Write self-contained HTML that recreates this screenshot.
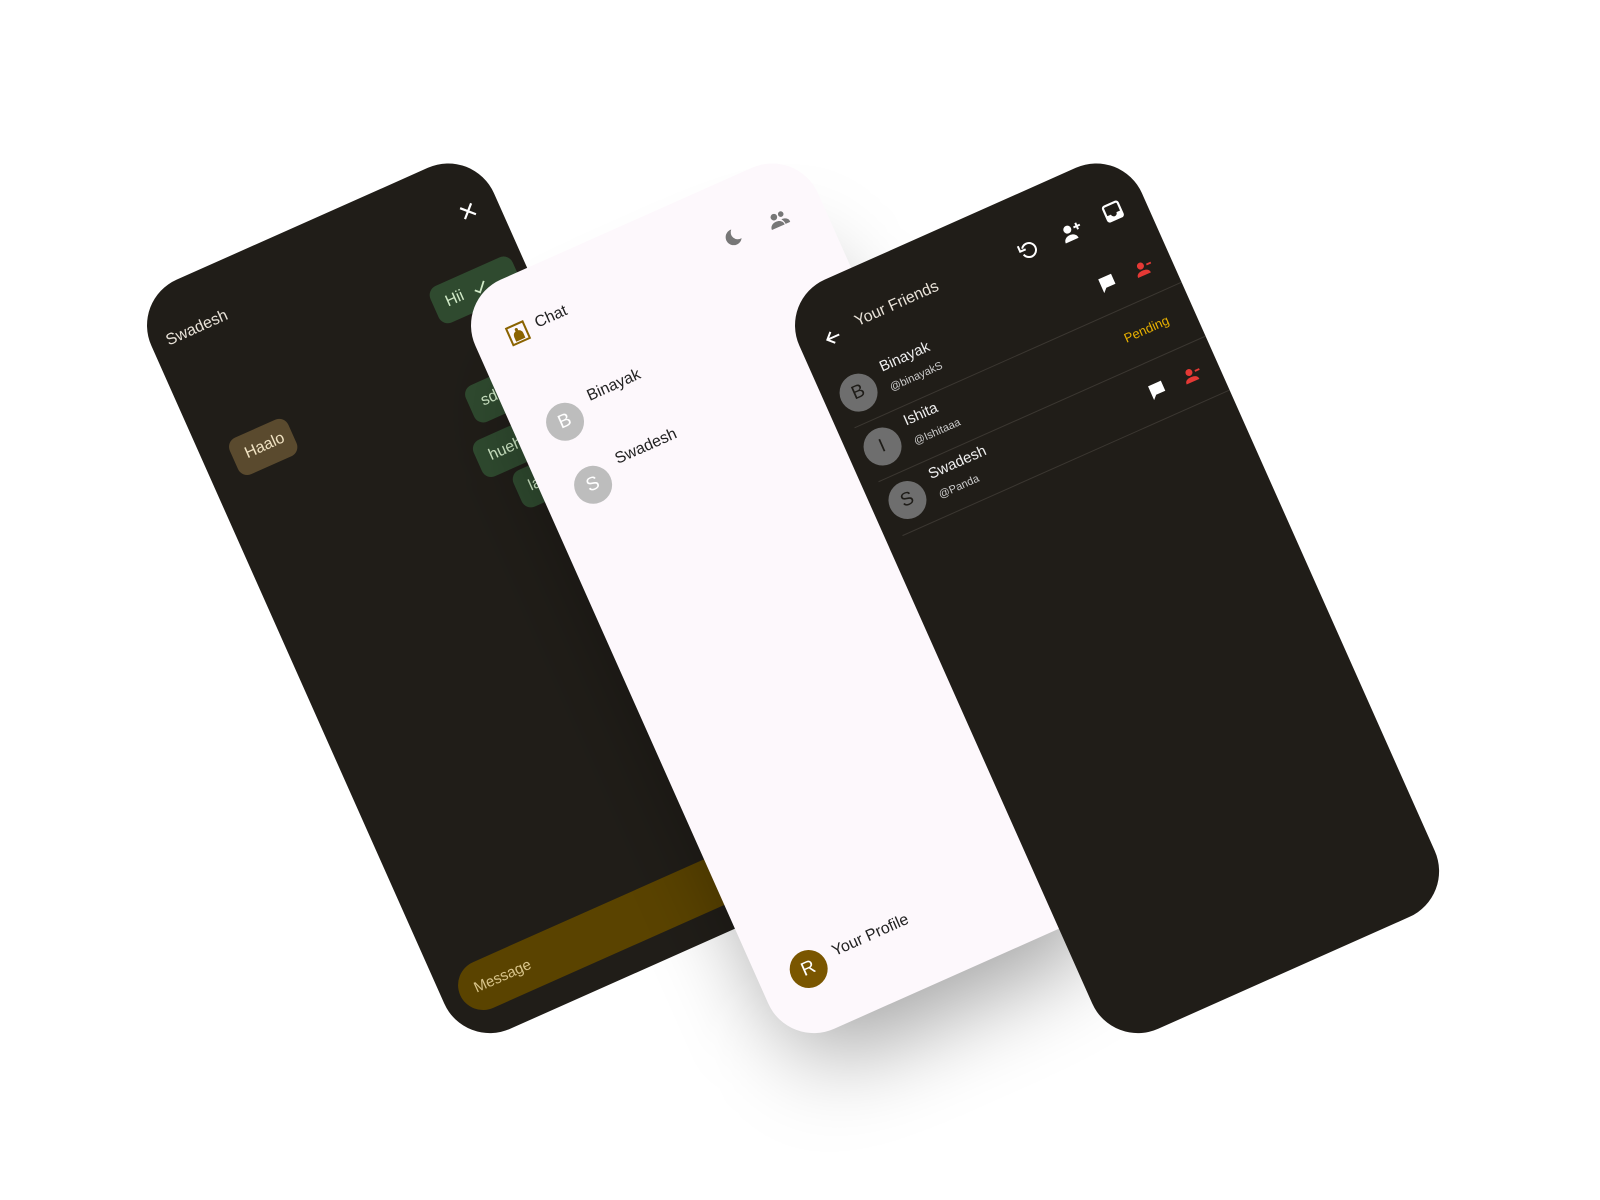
<!DOCTYPE html>
<html><head><meta charset="utf-8"><style>
*{margin:0;padding:0;box-sizing:border-box}
body{width:1600px;height:1200px;background:#fff;position:relative;overflow:hidden;font-family:"Liberation Sans",sans-serif}
.ph{position:absolute;width:375px;height:820px;border-radius:50px;transform-origin:0 0;transform:rotate(-24deg);overflow:hidden}
.dark{background:#201d18}
.light{background:#fdf8fc}
.shadow{position:absolute;width:340px;height:760px;border-radius:60px;transform-origin:0 0;transform:rotate(-24deg);background:rgba(0,0,0,.35);filter:blur(45px)}
.a{position:absolute}
.t{position:absolute;white-space:nowrap;transform:translateY(-50%)}
.c{position:absolute;transform:translate(-50%,-50%)}
.bub{position:absolute;height:40px;border-radius:10px;background:#2f4a2f;color:#cfe8c6;font-size:16px;line-height:40px;padding-left:13px;transform:translateY(-50%)}
.av{position:absolute;width:38px;height:38px;border-radius:50%;transform:translate(-50%,-50%);text-align:center;line-height:38px;font-size:19px}
.div{position:absolute;left:17px;right:0;height:1px;background:#3b3731}
</style></head><body>

<!-- LEFT PHONE -->
<div class="ph dark" style="left:131px;top:300px">
  <div class="t" style="left:16px;top:53px;font-size:16px;color:#e8e2d8">Swadesh</div>
  <svg class="c" style="left:344px;top:56px" width="18" height="18" viewBox="0 0 18 18"><path d="M3 3L15 15M15 3L3 15" stroke="#fff" stroke-width="2.2"/></svg>
  <div class="bub" style="left:274px;width:90px;top:131px">Hii <svg style="vertical-align:middle;margin-left:6px" width="16" height="14" viewBox="0 0 16 14"><path d="M2 7l4 4 8-9" stroke="#cfe8c6" stroke-width="1.8" fill="none"/></svg></div>
  <div class="bub" style="left:266px;width:100px;top:236px">sdfsdf</div>
  <div class="bub" style="left:251px;width:115px;top:289px">huehuehue</div>
  <div class="bub" style="left:275px;width:90px;top:333px">lala</div>
  <div class="bub" style="left:29px;width:64px;top:188px;background:#5a4a2e;color:#f0e2c2">Haalo</div>
  <div class="a" style="left:18px;top:744px;width:340px;height:50px;border-radius:25px;background:#5a4300"></div>
  <div class="t" style="left:34px;top:769px;font-size:15px;color:#d8c48a">Message</div>
</div>

<div class="shadow" style="left:500px;top:380px"></div>

<!-- MIDDLE PHONE -->
<div class="ph light" style="left:455px;top:300px">
  <svg class="c" style="left:44px;top:56px" width="22" height="22" viewBox="0 0 22 22"><rect x="2" y="2" width="18" height="18" fill="none" stroke="#8a6300" stroke-width="2"/><path d="M6 18v-5a5 5 0 0 1 10 0v5z" fill="#8a6300"/><circle cx="11" cy="7" r="1.6" fill="#8a6300"/></svg>
  <div class="t" style="left:64px;top:55px;font-size:16px;color:#222">Chat</div>
  <svg class="c" style="left:279px;top:56px" width="20" height="20" viewBox="0 0 20 20"><path d="M12 2a8 8 0 1 0 6 12A7 7 0 0 1 12 2z" fill="#777"/></svg>
  <svg class="c" style="left:328px;top:58px" width="24" height="18" viewBox="0 0 24 18"><circle cx="9" cy="5" r="3.3" fill="#777"/><circle cx="16.5" cy="5" r="2.8" fill="#777"/><path d="M2 16c0-4 3.5-6 7-6s7 2 7 6z" fill="#777"/><path d="M15 10c3 0 7 1.5 7 5v1h-5c0-2.5-1-4.5-2-6z" fill="#777"/></svg>
  <div class="av" style="left:51px;top:156px;background:#bdbdbd;color:#fff">B</div>
  <div class="t" style="left:82px;top:143px;font-size:16px;color:#222">Binayak</div>
  <div class="av" style="left:51px;top:225px;background:#bdbdbd;color:#fff">S</div>
  <div class="t" style="left:82px;top:212px;font-size:16px;color:#222">Swadesh</div>
  <div class="av" style="left:51px;top:755px;background:#7a5600;color:#fff">R</div>
  <div class="t" style="left:80px;top:750px;font-size:16px;color:#222">Your Profile</div>
</div>

<!-- RIGHT PHONE -->
<div class="ph dark" style="left:779px;top:300px">
  <svg class="c" style="left:34px;top:56px" width="18" height="18" viewBox="0 0 18 18"><path d="M16 9H3M9 3L3 9l6 6" stroke="#fff" stroke-width="2" fill="none"/></svg>
  <div class="t" style="left:61px;top:52px;font-size:16px;color:#e8e2d8">Your Friends</div>
  <svg class="c" style="left:248px;top:56px" width="20" height="20" viewBox="0 0 20 20"><path d="M5 6a7 7 0 1 1-1 6" stroke="#fff" stroke-width="2" fill="none"/><path d="M2 2v6h6" stroke="#fff" stroke-width="2" fill="none"/></svg>
  <svg class="c" style="left:295px;top:57px" width="22" height="20" viewBox="0 0 22 20"><circle cx="8" cy="6" r="4" fill="#fff"/><path d="M1 18c0-4 3.5-6 7-6s7 2 7 6z" fill="#fff"/><path d="M18 3v7M14.5 6.5h7" stroke="#fff" stroke-width="2"/></svg>
  <svg class="c" style="left:341px;top:55px" width="20" height="20" viewBox="0 0 20 20"><rect x="2" y="2" width="16" height="16" rx="2" fill="none" stroke="#fff" stroke-width="2.2"/><path d="M2 12h5a3 3 0 0 0 6 0h5v6H2z" fill="#fff"/></svg>

  <div class="av" style="left:35px;top:117px;background:#6e6e6e;color:#1e1c18">B</div>
  <div class="t" style="left:65px;top:103px;font-size:15px;color:#eee">Binayak</div>
  <div class="t" style="left:66px;top:126px;font-size:11px;color:#ccc">@binayakS</div>
  <svg class="c" style="left:307px;top:118px" width="18" height="18" viewBox="0 0 18 18"><path d="M2 2h14v11H6l-4 4z" fill="#fff"/></svg>
  <svg class="c" style="left:346px;top:119px" width="18" height="16" viewBox="0 0 18 16"><circle cx="7" cy="5" r="3.5" fill="#e53935"/><path d="M0 15c0-3.5 3-5 7-5s7 1.5 7 5z" fill="#e53935"/><path d="M13 6h5" stroke="#e53935" stroke-width="1.8"/></svg>
  <div class="div" style="top:147px"></div>

  <div class="av" style="left:35px;top:176px;background:#6e6e6e;color:#1e1c18">I</div>
  <div class="t" style="left:65px;top:162px;font-size:15px;color:#eee">Ishita</div>
  <div class="t" style="left:66px;top:185px;font-size:11px;color:#ccc">@Ishitaaa</div>
  <div class="t" style="left:300px;top:176px;font-size:13px;color:#e8b100">Pending</div>
  <div class="div" style="top:206px"></div>

  <div class="av" style="left:36px;top:235px;background:#6e6e6e;color:#1e1c18">S</div>
  <div class="t" style="left:66px;top:221px;font-size:15px;color:#eee">Swadesh</div>
  <div class="t" style="left:67px;top:244px;font-size:11px;color:#ccc">@Panda</div>
  <svg class="c" style="left:309px;top:236px" width="18" height="18" viewBox="0 0 18 18"><path d="M2 2h14v11H6l-4 4z" fill="#fff"/></svg>
  <svg class="c" style="left:347px;top:236px" width="18" height="16" viewBox="0 0 18 16"><circle cx="7" cy="5" r="3.5" fill="#e53935"/><path d="M0 15c0-3.5 3-5 7-5s7 1.5 7 5z" fill="#e53935"/><path d="M13 6h5" stroke="#e53935" stroke-width="1.8"/></svg>
  <div class="div" style="top:265px"></div>
</div>
</body></html>
